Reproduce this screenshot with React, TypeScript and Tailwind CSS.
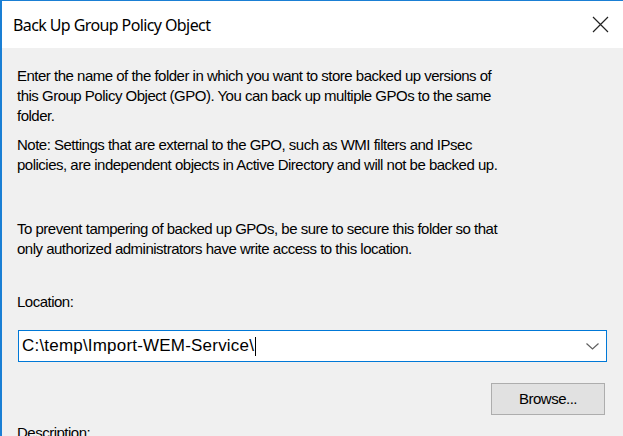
export default function App() {
  const body = "font-['Liberation_Sans',Arial,sans-serif] text-[15px] leading-[20px] tracking-[-0.5px] text-black";
  return (
    <div className="w-[623px] h-[436px] overflow-hidden bg-[#f0f0f0] border-l-2 border-t border-[#1a7fd4] flex flex-col">
      {/* title bar */}
      <div className="h-[47px] shrink-0 bg-white flex items-center justify-between pl-[11px] pr-[14px]">
        <span className="font-['Noto_Sans',sans-serif] text-[16px] tracking-[-0.6px] text-black">Back Up Group Policy Object</span>
        <svg width="17" height="17" viewBox="0 0 17 17" className="text-[#222]">
          <path d="M1 1 L16 16 M16 1 L1 16" stroke="currentColor" strokeWidth="1.2" fill="none" />
        </svg>
      </div>

      <div className={`flex flex-col pl-[15px] pr-[16px] pt-[18px] ${body}`}>
        <p>
          Enter the name of the folder in which you want to store backed up versions of
          <br />
          this Group Policy Object (GPO). You can back up multiple GPOs to the same
          <br />
          folder.
        </p>
        <p className="mt-[9px]">
          Note: Settings that are external to the GPO, such as WMI filters and IPsec
          <br />
          policies, are independent objects in Active Directory and will not be backed up.
        </p>
        <p className="mt-[44px]">
          To prevent tampering of backed up GPOs, be sure to secure this folder so that
          <br />
          only authorized administrators have write access to this location.
        </p>
        <p className="mt-[33px]">Location:</p>

        <div className="mt-[18px] ml-[1px] h-[32px] bg-white border border-[#0078d7] flex items-center pl-[3px] pr-[7px]">
          <span className="text-[17px] tracking-[0.2px]">C:\temp\Import-WEM-Service\</span>
          <span className="w-px h-[19px] bg-black ml-[1px]" />
          <div className="flex-1" />
          <svg width="13" height="7" viewBox="0 0 13 7">
            <path d="M0.5 0.5 L6.5 6 L12.5 0.5" stroke="#606060" strokeWidth="1.2" fill="none" />
          </svg>
        </div>

        <div className="mt-[21px] flex justify-end pr-[2px]">
          <button className="w-[114px] h-[32px] bg-[#e1e1e1] border border-[#adadad] text-black">
            Browse...
          </button>
        </div>

        <p className="mt-[8px]">Description:</p>
      </div>
    </div>
  );
}
